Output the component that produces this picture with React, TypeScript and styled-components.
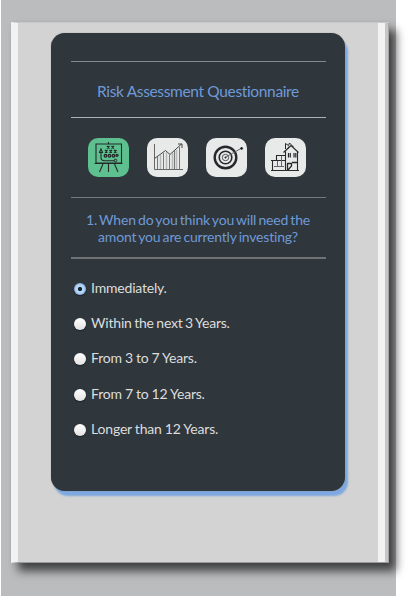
import React, { useState } from "react";
import styled, { createGlobalStyle, css } from "styled-components";

const Global = createGlobalStyle`
  *, *::before, *::after { box-sizing: border-box; }
  html, body { margin: 0; padding: 0; background: #fff; overflow: hidden; }
  body { font-family: Lato, "Open Sans", sans-serif; }
`;

const Page = styled.div`
  width: 411px;
  height: 597px;
  padding-left: 1px;
  background: #fff;
`;

const Backdrop = styled.div`
  width: 395px;
  height: 596px;
  padding: 22px 0 0 10px;
  background: #bbbcbe;
`;

const Screen = styled.main`
  width: 378px;
  height: 541px;
  padding-top: 11px;
  display: flex;
  justify-content: center;
  align-items: flex-start;
  background: #d3d3d3;
  border-left: 7px solid #f2f2f2;
  border-top: 1px solid #c9c9ca;
  border-bottom: 1px solid #9b9b9d;
  box-shadow:
    inset -1px 0 0 #a5a5a5,
    inset -4px 0 0 #c6c6c6,
    inset -11px 0 0 #f2f2f2,
    0 0 3px rgba(0, 0, 0, 0.06),
    7px 8px 9px rgba(0, 0, 0, 0.66);
`;

const Card = styled.section`
  width: 294px;
  height: 458px;
  margin: -1px 12px 0 0;
  padding: 28px 19px 0 20px;
  border-radius: 14px;
  background: #2f363c;
  box-shadow: 0 0 1px #777, 3px 5px 2px #7ea8df;
`;

const Header = styled.header`
  height: 57px;
  display: flex;
  align-items: center;
  justify-content: center;
  border-top: 1px solid #858789;
  border-bottom: 1px solid #b0b1b2;
`;

const Title = styled.h1`
  margin: 2px 0 0;
  font-size: 15.5px;
  font-weight: 400;
  line-height: 20px;
  letter-spacing: -0.35px;
  white-space: nowrap;
  color: #6f9ad7;
`;

const Steps = styled.nav`
  height: 79px;
  padding: 20px 0 0 17px;
  display: flex;
  gap: 18px;
`;

const Step = styled.button<{ $active?: boolean }>`
  width: 41px;
  height: 39px;
  padding: 0;
  display: grid;
  place-items: center;
  border: 0;
  border-radius: 10px;
  background: ${(p) => (p.$active ? "#5dc08e" : "#e8e9e9")};
`;

const Glyph = styled.svg`
  display: block;
  width: 41px;
  height: 39px;
  fill: none;
  stroke: #25292b;
`;

const Question = styled.h2`
  height: 62px;
  margin: 0;
  padding-top: 13px;
  border-top: 1px solid #77797b;
  border-bottom: 2px solid #707274;
  font-size: 14px;
  font-weight: 400;
  line-height: 17px;
  text-align: center;
  white-space: nowrap;
  color: #6f9ad7;
`;

const Line = styled.span`
  display: block;
  letter-spacing: -0.2px;
  word-spacing: -1.1px;
`;

const Options = styled.div`
  padding: 11px 0 0 3px;
`;

const Option = styled.label`
  height: 35.4px;
  display: flex;
  align-items: center;
  gap: 5.6px;
  font-size: 14px;
  line-height: 18px;
  white-space: nowrap;
  color: #dcdddd;
`;

const checkedDot = css`
  background: radial-gradient(circle, #18232e 0 1.6px, #b4dcf6 2.6px, #b5d5f3 4px, #8ba8e0 6px);
`;

const Radio = styled.input`
  appearance: none;
  flex: none;
  width: 12px;
  height: 12px;
  margin: 2px 0 0;
  border-radius: 50%;
  background: linear-gradient(#fff, #e2e2e2);
  box-shadow: 0 1px 1px #1d2226;
  &:checked { ${checkedDot} }
`;

const OptionText = styled.span<{ $gap: number }>`
  letter-spacing: -0.2px;
  word-spacing: ${(p) => p.$gap}px;
`;

const StrategyIcon = () => (
  <Glyph viewBox="0 0 41 39">
    <path d="M8 6h25.500v19H8zM6.500 25.500h28M20.500 4v2" strokeWidth="1.1" />
    <path d="M15 26l-3.500 8M20.500 26v8M26.500 26l3.500 8" strokeWidth="1.1" />
    <path d="M13 14v5.500q0 3.200 3.500 3.200h10M11.500 14.500l1.500-3.500 1.500 3.500z" strokeWidth="1.1" />
    <circle cx="27.500" cy="22.500" r="1.300" />
    <g strokeWidth="1.300">
      <path d="M19 8l2.500 2.500m0-2.500l-2.500 2.500M23.500 8l2.500 2.500m0-2.500l-2.500 2.500M17 12l2.500 2.500m0-2.500l-2.500 2.500M21.500 12l2.500 2.500m0-2.500l-2.500 2.500M26 12l2.500 2.500m0-2.500l-2.500 2.500" />
      <circle cx="17.500" cy="17.800" r="1.300" />
      <circle cx="21.500" cy="17.800" r="1.300" />
      <circle cx="25.500" cy="17.800" r="1.300" />
      <circle cx="29" cy="17.300" r="1" />
    </g>
  </Glyph>
);

const GrowthIcon = () => (
  <Glyph viewBox="0 0 41 39">
    <path d="M7.500 6v25.500H36" stroke="#666" />
    <path d="M7.500 20.500L18.500 12.500l4.500 4L34.500 6M31 6h4v4" stroke="#444" />
    <path d="M10.500 19v12M16.500 15v16M22.500 17v14M27.500 13v18M32.500 9v22" stroke="#777" />
    <path d="M13.500 17v14M19.500 14v17M25.500 15v16M29.500 12v19" stroke="#b8b8b8" strokeWidth="1.500" />
  </Glyph>
);

const TargetIcon = () => (
  <Glyph viewBox="0 0 41 39">
    <circle cx="19.500" cy="19.500" r="10.800" strokeWidth="2.400" />
    <circle cx="19.500" cy="19.500" r="6.300" strokeWidth="1.600" />
    <circle cx="19.500" cy="19.500" r="3.200" stroke="#555" strokeWidth="1" />
    <circle cx="19.500" cy="19.500" r=".6" fill="#222" />
    <path d="M20 19l15-8.500" stroke="#666" strokeWidth="1" />
    <path d="M34.500 10l1.500-.7.800 1.400-1.500.8z" fill="#222" />
  </Glyph>
);

const HouseIcon = () => (
  <Glyph viewBox="0 0 41 39">
    <path d="M6 32.500h28M7.500 32v-9.500M6 22.500h14M11.500 22v-4M11 17.500h10" strokeWidth="1.100" />
    <path d="M20.500 32V13.500M32.500 32V13.500M18.500 14.500L26 7.500l7.500 7" strokeWidth="1.100" />
    <path d="M20.500 11V5.500l3 2 1-2.500 4 4M24 8.500l-1.500 2.500" />
    <path d="M23.500 15v4.500M25.300 15v4.500M29 15v4.500M30.800 15v4.500" strokeWidth="1.200" />
    <path d="M22.500 32v-7M22.500 25.500h4v2.500l-3.500 4M27 24.500h5" strokeWidth="1.300" />
    <path d="M9 28.500h10M12.500 23v5M16.500 18v10" stroke="#666" />
  </Glyph>
);

const steps = [
  { name: "Strategy", icon: <StrategyIcon /> },
  { name: "Growth", icon: <GrowthIcon /> },
  { name: "Goal", icon: <TargetIcon /> },
  { name: "Home", icon: <HouseIcon /> },
];

const options = [
  { text: "Immediately.", gap: 0 },
  { text: "Within the next 3 Years.", gap: -0.9 },
  { text: "From 3 to 7 Years.", gap: -0.3 },
  { text: "From 7 to 12 Years.", gap: -0.3 },
  { text: "Longer than 12 Years.", gap: -0.2 },
];

export default function App() {
  const [choice, setChoice] = useState(0);
  return (
    <Page>
      <Global />
      <Backdrop>
        <Screen>
          <Card>
            <Header>
              <Title>Risk Assessment Questionnaire</Title>
            </Header>
            <Steps>
              {steps.map((step, i) => (
                <Step key={step.name} $active={i === 0} aria-label={step.name}>
                  {step.icon}
                </Step>
              ))}
            </Steps>
            <Question>
              <Line>1. When do you think you will need the</Line>
              <Line>amont you are currently investing?</Line>
            </Question>
            <Options>
              {options.map((option, i) => (
                <Option key={option.text}>
                  <Radio type="radio" name="horizon" checked={choice === i} onChange={() => setChoice(i)} />
                  <OptionText $gap={option.gap}>{option.text}</OptionText>
                </Option>
              ))}
            </Options>
          </Card>
        </Screen>
      </Backdrop>
    </Page>
  );
}
